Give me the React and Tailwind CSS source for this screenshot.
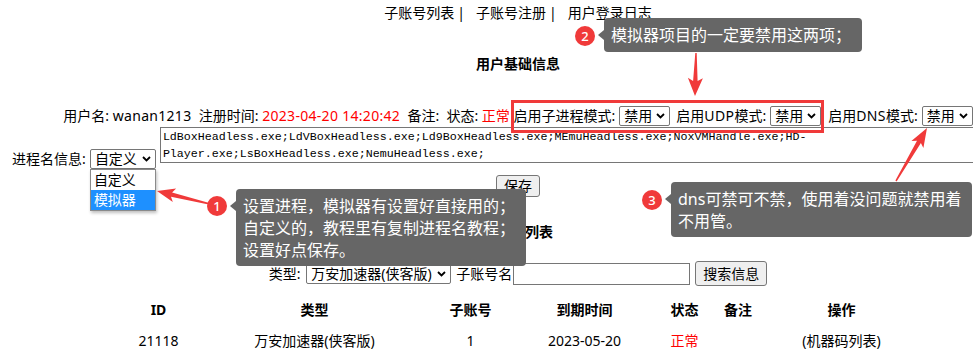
import React from "react";

function Chevron() {
  return (
    <svg width="9" height="6" viewBox="0 0 9 6" className="shrink-0">
      <path d="M1 1 L4.5 4.5 L8 1" fill="none" stroke="#000" strokeWidth="1.8" />
    </svg>
  );
}

function Sel({ w, h = "h-[20px]", text, extra = "" }) {
  return (
    <span
      className={`inline-flex items-center justify-between ${h} ${w} ${extra} rounded-[2px] border border-[#767676] bg-white pl-[4px] pr-[4px] leading-none`}
    >
      <span>{text}</span>
      <Chevron />
    </span>
  );
}

function arrowPoly(x1, y1, x2, y2, headLen, headW, tailW, neckW) {
  const dx = x2 - x1;
  const dy = y2 - y1;
  const L = Math.hypot(dx, dy);
  const ux = dx / L;
  const uy = dy / L;
  const px = -uy;
  const py = ux;
  const nx = x2 - ux * headLen;
  const ny = y2 - uy * headLen;
  const bx = x2 - ux * (headLen + 3);
  const by = y2 - uy * (headLen + 3);
  const pts = [
    [x1 + (px * tailW) / 2, y1 + (py * tailW) / 2],
    [nx + (px * neckW) / 2, ny + (py * neckW) / 2],
    [bx + (px * headW) / 2, by + (py * headW) / 2],
    [x2, y2],
    [bx - (px * headW) / 2, by - (py * headW) / 2],
    [nx - (px * neckW) / 2, ny - (py * neckW) / 2],
    [x1 - (px * tailW) / 2, y1 - (py * tailW) / 2],
  ];
  return pts.map((p) => p[0].toFixed(1) + "," + p[1].toFixed(1)).join(" ");
}

function Badge({ n, cls }) {
  return (
    <div
      className={`absolute ${cls} flex h-[20px] w-[20px] items-center justify-center rounded-full bg-[#f03a3a] text-[13px] font-medium leading-none text-white`}
    >
      {n}
    </div>
  );
}

function Tip({ cls, children }) {
  return (
    <div
      className={`absolute ${cls} rounded-[4px] bg-[#666666] pl-[7px] pr-[6px] text-[16px] leading-[22px] whitespace-nowrap text-white`}
    >
      <span className="absolute left-[-6px] top-[12px] h-0 w-0 border-y-[5px] border-r-[6px] border-y-transparent border-r-[#666666]" />
      {children}
    </div>
  );
}

export default function App() {
  const textareaValue =
    "LdBoxHeadless.exe;LdVBoxHeadless.exe;Ld9BoxHeadless.exe;MEmuHeadless.exe;NoxVMHandle.exe;HD-\nPlayer.exe;LsBoxHeadless.exe;NemuHeadless.exe;";
  return (
    <div className="relative h-[351px] w-[973px] overflow-hidden bg-white font-[family-name:'Noto_Sans','Noto_Sans_CJK_SC',sans-serif] text-[14px] text-black">
      <div className="w-[1036px] pt-[3px]">
        {/* nav */}
        <div className="flex h-[20px] items-center justify-center leading-[20px] whitespace-pre">
          <span>子账号列表</span>
          <span className="ml-[3px]">|</span>
          <span className="ml-[11px]">子账号注册</span>
          <span className="ml-[3px]">|</span>
          <span className="ml-[11px]">用户登录日志</span>
        </div>

        {/* title */}
        <div className="mt-[31px] h-[20px] text-center font-bold leading-[20px]">用户基础信息</div>

        {/* row1 */}
        <div className="mt-[32px] flex h-[20px] items-center justify-center whitespace-pre leading-[20px]">
          <span>用户名: </span>
          <span className="tracking-[0.3px]">wanan1213</span>
          <span>  注册时间: </span>
          <span className="tracking-[0.3px] text-[#ff0000]">2023-04-20 14:20:42</span>
          <span>  备注:  状态: </span>
          <span className="text-[#ff0000]">正常</span>
          <span> </span>
          <span className="relative flex items-center">
            <span>启用子进程模式:</span>
            <Sel w="w-[51px]" text="禁用" extra="ml-[4px]" />
            <span className="ml-[6px]">
              启用<span className="tracking-[0.4px]">UDP</span>模式:
            </span>
            <Sel w="w-[51px]" text="禁用" extra="ml-[4px]" />
            <span className="absolute -bottom-[7px] -left-[3px] -right-[3px] -top-[6px] z-10 border-[3px] border-[#f03a3a]" />
          </span>
          <span className="ml-[7px]">
            启用<span className="tracking-[0.4px]">DNS</span>模式:
          </span>
          <Sel w="w-[51px]" text="禁用" extra="ml-[4px]" />
        </div>

        {/* textarea row */}
        <div className="mt-[1px] flex items-start justify-center">
          <div className="mt-[22px] flex h-[20px] items-center leading-[20px]">
            <span>进程名信息:</span>
            <span className="relative ml-[4px]">
              <Sel w="w-[66px]" text="自定义" />
              <div className="absolute left-0 top-[20px] z-10 w-[66px] border border-[#8a8a8a] bg-white text-left shadow-[1px_2px_3px_rgba(0,0,0,0.25)]">
                <div className="h-[20px] pl-[3px] leading-[20px]">自定义</div>
                <div className="h-[20px] bg-[#1e90ff] pl-[3px] leading-[20px] text-white">模拟器</div>
              </div>
            </span>
          </div>
          <textarea
            readOnly
            value={textareaValue}
            className="ml-[4px] h-[36px] w-[864px] resize-none overflow-hidden border border-[#767676] px-[2px] pt-[1px] font-[family-name:'Liberation_Mono',monospace] text-[11.67px] leading-[17px] text-black outline-none"
          />
        </div>

        {/* save */}
        <div className="mt-[6px] flex justify-center">
          <button className="h-[22px] w-[44px] rounded-[3px] border border-[#767676] bg-[#efefef] text-[14px] leading-none">
            保存
          </button>
        </div>

        {/* sub title */}
        <div className="mt-[25px] h-[20px] text-center font-bold leading-[20px]">子账号列表</div>

        {/* search row */}
        <div className="mt-[19px] flex h-[25px] items-center justify-center whitespace-pre">
          <span>类型: </span>
          <Sel w="w-[145px]" h="h-[20px]" text="万安加速器(侠客版)" extra="ml-[2px]" />
          <span className="ml-[5px]">子账号名</span>
          <span className="ml-[1px] h-[22px] w-[177px] border border-[#767676] bg-white" />
          <button className="ml-[5px] h-[25px] w-[72px] rounded-[3px] border border-[#767676] bg-[#efefef] text-[14px] leading-none">
            搜索信息
          </button>
        </div>

        {/* table */}
        <div className="mx-auto mt-[8px] w-[799px]">
          <div className="grid h-[31px] grid-cols-[80px_232px_80px_148px_52px_55px_152px] items-center text-center font-bold">
            <span>ID</span>
            <span>类型</span>
            <span>子账号</span>
            <span>到期时间</span>
            <span>状态</span>
            <span>备注</span>
            <span>操作</span>
          </div>
          <div className="grid h-[31px] grid-cols-[80px_232px_80px_148px_52px_55px_152px] items-center text-center">
            <span>21118</span>
            <span>万安加速器(侠客版)</span>
            <span>1</span>
            <span>2023-05-20</span>
            <span className="text-[#ff0000]">正常</span>
            <span></span>
            <span>(机器码列表)</span>
          </div>
        </div>
      </div>

      {/* annotations */}
      <svg className="pointer-events-none absolute left-0 top-0 z-20" width="973" height="351">
        <polygon points={arrowPoly(210, 204, 157, 191, 15, 14, 1.5, 4.5)} fill="#f03a3a" />
        <polygon points={arrowPoly(696, 53, 695, 96, 15, 15, 1.5, 4.5)} fill="#f03a3a" />
        <polygon points={arrowPoly(896, 181, 927, 128, 16, 14, 1.5, 4.5)} fill="#f03a3a" />
      </svg>

      <Badge n="1" cls="left-[207px] top-[196px] z-30" />
      <Tip cls="left-[236px] top-[189px] z-30 w-[290px] pt-[6px] pb-[5px]">
        设置进程，模拟器有设置好直接用的；
        <br />
        自定义的，教程里有复制进程名教程；
        <br />
        设置好点保存。
      </Tip>

      <Badge n="2" cls="left-[575px] top-[26px] z-30" />
      <Tip cls="left-[604px] top-[18px] z-30 w-[258px] pt-[6px] pb-[6px]">模拟器项目的一定要禁用这两项；</Tip>

      <Badge n="3" cls="left-[642px] top-[190px] z-30" />
      <Tip cls="left-[671px] top-[182px] z-30 w-[301px] pt-[6px] pb-[5px]">
        dns可禁可不禁，使用着没问题就禁用着
        <br />
        不用管。
      </Tip>
    </div>
  );
}
